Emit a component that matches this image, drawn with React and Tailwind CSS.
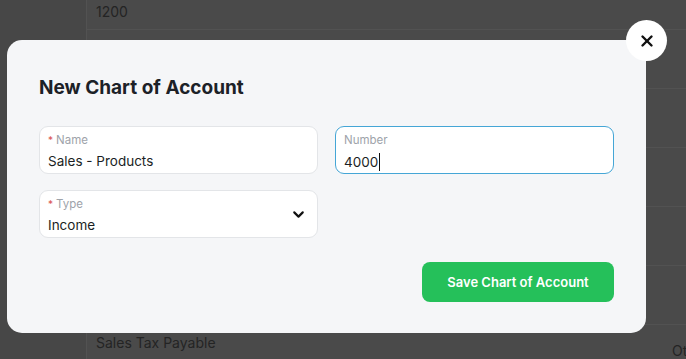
import { ChevronDown, X } from "lucide-react";

function Field({ label, value, required, focused, select }) {
  return (
    <div
      className={`relative h-[48px] rounded-[9px] border bg-white px-[8px] pt-[6px] ${
        focused ? "border-[#45a6d6]" : "border-[#e3e5e8]"
      }`}
    >
      <div className="flex items-center gap-[3px] text-[11.5px] leading-[14px] text-[#9ea3aa]">
        {required && <span className="text-[#d9534f] text-[10px]">*</span>}
        <span>{label}</span>
      </div>
      <div className="mt-[6px] flex items-center text-[13.5px] leading-[17px] text-[#1b1f24]">
        {value}
        {focused && <span className="ml-[1px] inline-block h-[18px] w-[1px] bg-[#111]" />}
      </div>
      {select && (
        <ChevronDown
          className="absolute right-[10px] top-[15px] h-[17px] w-[17px] text-[#111]"
          strokeWidth={3}
        />
      )}
    </div>
  );
}

export default function App() {
  return (
    <div
      className="relative h-[359px] w-[686px] overflow-hidden bg-[#4a4a4a]"
      style={{ fontFamily: "Inter, 'Noto Sans', sans-serif" }}
    >
      {/* background table under overlay */}
      <div className="flex h-full">
        <div className="w-[86px] bg-[#474747]" />
        <div className="flex-1 border-l border-[#525252]">
          <div className="h-[30px] border-b border-[#525252] px-[9px] pt-[1px] text-[14px] text-[#242424]">
            1200
          </div>
          {[0, 1, 2, 3, 4].map((i) => (
            <div key={i} className="h-[59px] border-b border-[#525252]" />
          ))}
          <div className="flex justify-between pl-[9px] pt-[7px] text-[14px] text-[#242424]">
            <span>Sales Tax Payable</span>
            <span className="mt-[8px] w-[14px] overflow-hidden whitespace-nowrap">Ot</span>
          </div>
        </div>
      </div>

      {/* modal */}
      <div className="absolute left-[7px] top-[40px] h-[293px] w-[639px] rounded-[15px] bg-[#f5f6f8] px-[32px] pt-[36px]">
        <h2 className="text-[19px] font-bold leading-[24px] text-[#1c2127]">
          New Chart of Account
        </h2>
        <div className="mt-[26px] grid grid-cols-2 gap-x-[17px] gap-y-[16px]">
          <Field label="Name" value="Sales - Products" required />
          <Field label="Number" value="4000" focused />
          <Field label="Type" value="Income" required select />
        </div>
        <div className="mt-[24px] flex justify-end">
          <button className="h-[40px] w-[192px] rounded-[8px] bg-[#25c05a] pt-[1px] text-[13px] font-semibold text-white">
            Save Chart of Account
          </button>
        </div>
      </div>

      <button className="absolute left-[626px] top-[20px] flex h-[41px] w-[41px] items-center justify-center rounded-full bg-white">
        <X className="h-[18px] w-[18px] text-[#111]" strokeWidth={3.2} />
      </button>
    </div>
  );
}
